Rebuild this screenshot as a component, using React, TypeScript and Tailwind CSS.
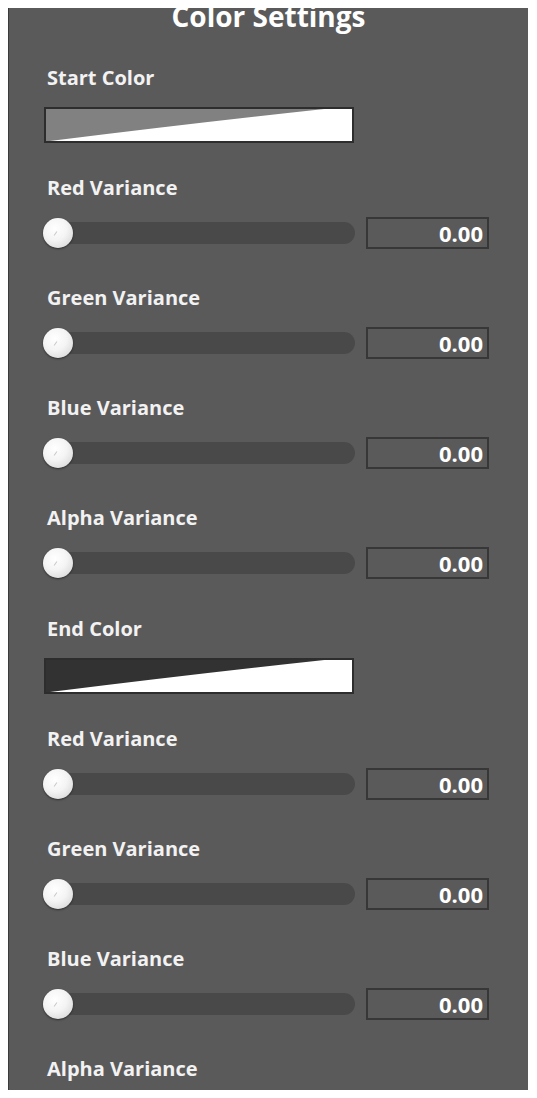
const FONT = { fontFamily: '"Open Sans", "DejaVu Sans", sans-serif' };

type Block =
  | { kind: 'swatch'; label: string; fill: string }
  | { kind: 'slider'; label: string; value?: string };

const blocks: Block[] = [
  { kind: 'swatch', label: 'Start Color', fill: '#828182' },
  { kind: 'slider', label: 'Red Variance', value: '0.00' },
  { kind: 'slider', label: 'Green Variance', value: '0.00' },
  { kind: 'slider', label: 'Blue Variance', value: '0.00' },
  { kind: 'slider', label: 'Alpha Variance', value: '0.00' },
  { kind: 'swatch', label: 'End Color', fill: '#333233' },
  { kind: 'slider', label: 'Red Variance', value: '0.00' },
  { kind: 'slider', label: 'Green Variance', value: '0.00' },
  { kind: 'slider', label: 'Blue Variance', value: '0.00' },
  // last one runs off the bottom of the panel, only its label shows
  { kind: 'slider', label: 'Alpha Variance' },
];

function Swatch({ fill }: { fill: string }) {
  return (
    <div className="mt-[17px] h-[36px] w-[310px] border-2 border-[#2e2d2e] bg-white">
      <svg viewBox="0 0 310 32" preserveAspectRatio="none" className="block h-full w-full">
        <path d="M0 0 L282 0 Q150 14 4 32 L0 32 Z" fill={fill} />
      </svg>
    </div>
  );
}

function SliderRow({ value }: { value: string }) {
  return (
    <div className="mt-[17px] flex h-[32px] items-center gap-[11px]">
      <div className="relative h-[22px] w-[311px] rounded-full bg-[#4a494a]">
        <div className="absolute left-[-1px] top-1/2 h-[30px] w-[30px] -translate-y-1/2 rounded-full bg-[radial-gradient(circle_at_40%_35%,#ffffff_0%,#f4f4f4_45%,#cfcfcf_100%)] shadow-[0_1px_2px_rgba(0,0,0,0.5)]">
          <div className="absolute left-[12px] top-[13px] h-[5px] w-[1px] rotate-[35deg] bg-[#c8c8c8]" />
        </div>
      </div>
      <div className="flex h-[32px] w-[123px] items-center justify-end border-2 border-[#383738] pr-[4px]">
        <span className="text-[22px] font-bold leading-none text-white">{value}</span>
      </div>
    </div>
  );
}

export default function App() {
  return (
    <div className="min-h-screen bg-white pl-[8px] pt-[8px]" style={FONT}>
      <div className="h-[1082px] w-[520px] overflow-hidden border-l border-[#3c3b3c] bg-[#5b5a5b] px-[35px]">
        <div className="-mt-[5px] h-[26px] text-center text-[28px] font-bold leading-[26px] text-white">
          Color Settings
        </div>
        <div className="pt-[37px]">
          {blocks.map((b, i) => (
            <div key={i} className={i === 0 ? '' : b.kind === 'swatch' ? 'mt-[38px]' : blocks[i - 1].kind === 'swatch' ? 'mt-[33px]' : 'mt-[37px]'}>
              <div className="pl-[3px] text-[20px] font-bold leading-[24px] text-[#f2f2f2]">{b.label}</div>
              {b.kind === 'swatch' ? <Swatch fill={b.fill} /> : b.value ? <SliderRow value={b.value} /> : null}
            </div>
          ))}
        </div>
      </div>
    </div>
  );
}
